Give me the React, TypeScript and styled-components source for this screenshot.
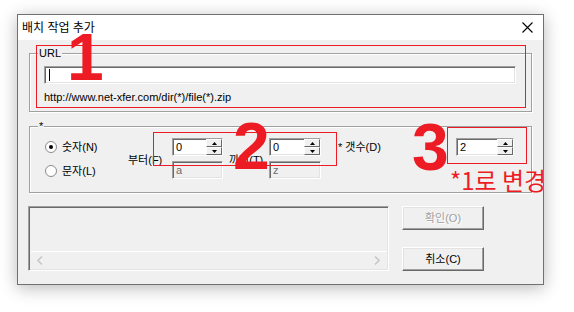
import React from 'react';
import styled, { createGlobalStyle } from 'styled-components';

const RED = '#ed1c24';

const GlobalStyle = createGlobalStyle`
  html, body {
    margin: 0;
    background: #fff;
  }
  body {
    font-family: "Liberation Sans", "Noto Sans CJK KR", sans-serif;
    color: #000;
  }
`;

const Page = styled.div`
  height: 312px;
  box-sizing: border-box;
  padding: 14px 0 0 17px;
  overflow: hidden;
`;

const Window = styled.div`
  position: relative;
  width: 527px;
  height: 271px;
  box-sizing: border-box;
  border: 1px solid #707070;
  background: #f0f0f0;
  box-shadow: 0 3px 16px rgba(0, 0, 0, 0.28);
  display: flex;
  flex-direction: column;
`;

const TitleBar = styled.div`
  height: 25px;
  flex: none;
  background: #fff;
  display: flex;
  align-items: center;
  justify-content: space-between;
  padding: 0 10px 0 4px;
  font-size: 12px;
  line-height: 14px;
`;

const CloseIcon = () => (
  <svg width="11" height="11" viewBox="0 0 11 11">
    <path d="M0.5 0.5 L10.5 10.5 M10.5 0.5 L0.5 10.5" stroke="#000" strokeWidth="1.1" fill="none" />
  </svg>
);

const Body = styled.div`
  font-size: 11px;
  line-height: 14px;
`;

const GroupBox = styled.div<{ $mt: number; $h: number }>`
  position: relative;
  box-sizing: border-box;
  margin: ${(p) => p.$mt}px 0 0 11px;
  width: 503px;
  height: ${(p) => p.$h}px;
  border: 1px solid #a0a0a0;
  box-shadow: inset 1px 1px 0 #fff, 1px 1px 0 #fff;
`;

const Legend = styled.span`
  position: absolute;
  top: -8px;
  left: 8px;
  padding: 0 1px;
  background: #f0f0f0;
  line-height: 14px;
`;

const Sunken = styled.div<{ $w: number; $disabled?: boolean }>`
  box-sizing: border-box;
  width: ${(p) => p.$w}px;
  height: 18px;
  border: 1px solid;
  border-color: #a0a0a0 #fff #fff #a0a0a0;
  box-shadow: inset 1px 1px 0 #696969, inset -1px -1px 0 #e3e3e3;
  background: ${(p) => (p.$disabled ? '#f0f0f0' : '#fff')};
  color: ${(p) => (p.$disabled ? '#6d6d6d' : '#000')};
  display: flex;
  align-items: center;
  padding-left: 3px;
`;

const UrlBody = styled.div`
  padding: 12px 0 0 14px;
`;

const Caret = styled.span`
  width: 1px;
  height: 12px;
  background: #000;
  margin-left: 1px;
`;

const Hint = styled.div`
  margin-top: 6px;
`;

const OptionGrid = styled.div`
  display: grid;
  grid-template-columns: 83px 44px 57px 40px 69px 118px 58px;
  grid-template-rows: 18px 18px;
  row-gap: 5px;
  padding: 11px 0 0 15px;
`;

const RadioCol = styled.div`
  grid-column: 1;
  grid-row: 1 / span 2;
  padding-top: 2px;
  display: flex;
  flex-direction: column;
  gap: 10px;
`;

const RadioRow = styled.label`
  display: flex;
  align-items: center;
  gap: 5px;
  height: 14px;
  white-space: nowrap;
`;

const Radio = ({ checked }: { checked?: boolean }) => (
  <svg width="12" height="12" viewBox="0 0 12 12">
    <circle cx="6" cy="6" r="5.5" fill="#fff" stroke="#8a8a8a" />
    {checked && <circle cx="6" cy="6" r="2" fill="#000" />}
  </svg>
);

const FieldLabel = styled.span<{ $col: number; $mt: number }>`
  grid-column: ${(p) => p.$col};
  grid-row: 1 / span 2;
  margin-top: ${(p) => p.$mt}px;
  white-space: nowrap;
  height: 14px;
`;

const Cell = styled.div<{ $col: number; $row: number }>`
  grid-column: ${(p) => p.$col};
  grid-row: ${(p) => p.$row};
`;

const SpinValue = styled.span`
  flex: 1;
`;

const SpinButtons = styled.div`
  width: 16px;
  height: 16px;
  display: flex;
  flex-direction: column;
`;

const SpinBtn = styled.div`
  flex: 1;
  box-sizing: border-box;
  border: 1px solid;
  border-color: #fff #696969 #696969 #fff;
  background: #f0f0f0;
  display: flex;
  align-items: center;
  justify-content: center;
`;

const Arrow = ({ up }: { up?: boolean }) => (
  <svg width="5" height="3" viewBox="0 0 5 3">
    <polygon points={up ? '0,3 5,3 2.5,0' : '0,0 5,0 2.5,3'} fill="#000" />
  </svg>
);

const Spin = ({ value, w }: { value: string; w: number }) => (
  <Sunken $w={w}>
    <SpinValue>{value}</SpinValue>
    <SpinButtons>
      <SpinBtn>
        <Arrow up />
      </SpinBtn>
      <SpinBtn>
        <Arrow />
      </SpinBtn>
    </SpinButtons>
  </Sunken>
);

const BottomRow = styled.div`
  display: flex;
  gap: 13px;
  margin: 13px 0 0 10px;
`;

const ListBox = styled.div`
  box-sizing: border-box;
  width: 361px;
  height: 65px;
  border: 1px solid;
  border-color: #a0a0a0 #fff #fff #a0a0a0;
  box-shadow: inset 1px 1px 0 #696969, inset -1px -1px 0 #e3e3e3;
  display: flex;
  flex-direction: column;
  justify-content: flex-end;
`;

const ScrollBar = styled.div`
  height: 17px;
  border-top: 1px solid #fff;
  margin: 0 1px 1px 2px;
  display: flex;
  align-items: center;
  justify-content: space-between;
  padding: 0 7px 0 6px;
`;

const Chevron = ({ right }: { right?: boolean }) => (
  <svg width="6" height="9" viewBox="0 0 6 9">
    <path d={right ? 'M1 0.5 L5 4.5 L1 8.5' : 'M5 0.5 L1 4.5 L5 8.5'} stroke="#c8c8c8" strokeWidth="1.6" fill="none" />
  </svg>
);

const ButtonCol = styled.div`
  display: flex;
  flex-direction: column;
  justify-content: space-between;
  height: 65px;
`;

const Button = styled.div<{ $disabled?: boolean }>`
  box-sizing: border-box;
  width: 82px;
  height: 24px;
  border: 1px solid;
  border-color: #fff #696969 #696969 #fff;
  box-shadow: inset -1px -1px 0 #a0a0a0, inset 1px 1px 0 #e3e3e3;
  display: flex;
  align-items: center;
  justify-content: center;
  color: ${(p) => (p.$disabled ? '#a0a0a0' : '#000')};
  text-shadow: ${(p) => (p.$disabled ? '1px 1px 0 #fff' : 'none')};
`;

const Marker = styled.div<{ $x: number; $y: number; $w: number; $h: number }>`
  position: absolute;
  left: ${(p) => p.$x}px;
  top: ${(p) => p.$y}px;
  width: ${(p) => p.$w}px;
  height: ${(p) => p.$h}px;
  box-sizing: border-box;
  border: 1px solid ${RED};
  pointer-events: none;
`;

const BigNum = styled.span<{ $x: number; $y: number }>`
  position: absolute;
  left: ${(p) => p.$x}px;
  top: ${(p) => p.$y}px;
  font-family: "Liberation Sans", sans-serif;
  font-weight: 700;
  font-size: 66px;
  line-height: 66px;
  color: ${RED};
`;

const Note = styled.span`
  position: absolute;
  left: 432px;
  top: 153px;
  font-family: "Noto Sans CJK KR", sans-serif;
  font-size: 24px;
  line-height: 24px;
  color: ${RED};
  white-space: nowrap;
`;

export default function App() {
  return (
    <>
      <GlobalStyle />
      <Page>
        <Window>
          <TitleBar>
            <span>배치 작업 추가</span>
            <CloseIcon />
          </TitleBar>
          <Body>
            <GroupBox $mt={13} $h={59}>
              <Legend>URL</Legend>
              <UrlBody>
                <Sunken $w={472}>
                  <Caret />
                </Sunken>
                <Hint>http://www.net-xfer.com/dir(*)/file(*).zip</Hint>
              </UrlBody>
            </GroupBox>

            <GroupBox $mt={14} $h={67}>
              <Legend>*</Legend>
              <OptionGrid>
                <RadioCol>
                  <RadioRow>
                    <Radio checked />
                    숫자(N)
                  </RadioRow>
                  <RadioRow>
                    <Radio />
                    문자(L)
                  </RadioRow>
                </RadioCol>
                <FieldLabel $col={2} $mt={15}>부터(F)</FieldLabel>
                <Cell $col={3} $row={1}>
                  <Spin value="0" w={51} />
                </Cell>
                <Cell $col={3} $row={2}>
                  <Sunken $w={51} $disabled>a</Sunken>
                </Cell>
                <FieldLabel $col={4} $mt={15}>까지(T)</FieldLabel>
                <Cell $col={5} $row={1}>
                  <Spin value="0" w={52} />
                </Cell>
                <Cell $col={5} $row={2}>
                  <Sunken $w={52} $disabled>z</Sunken>
                </Cell>
                <FieldLabel $col={6} $mt={2}>* 갯수(D)</FieldLabel>
                <Cell $col={7} $row={1}>
                  <Spin value="2" w={58} />
                </Cell>
              </OptionGrid>
            </GroupBox>

            <BottomRow>
              <ListBox>
                <ScrollBar>
                  <Chevron />
                  <Chevron right />
                </ScrollBar>
              </ListBox>
              <ButtonCol>
                <Button $disabled>확인(O)</Button>
                <Button>취소(C)</Button>
              </ButtonCol>
            </BottomRow>
          </Body>

          <Marker $x={18} $y={30} $w={490} $h={63} />
          <Marker $x={135} $y={117} $w={184} $h={34} />
          <Marker $x={429} $y={112} $w={80} $h={37} />
          <BigNum $x={49} $y={9}>1</BigNum>
          <BigNum $x={215} $y={98}>2</BigNum>
          <BigNum $x={394} $y={99}>3</BigNum>
          <Note>*1로 변경</Note>
        </Window>
      </Page>
    </>
  );
}
